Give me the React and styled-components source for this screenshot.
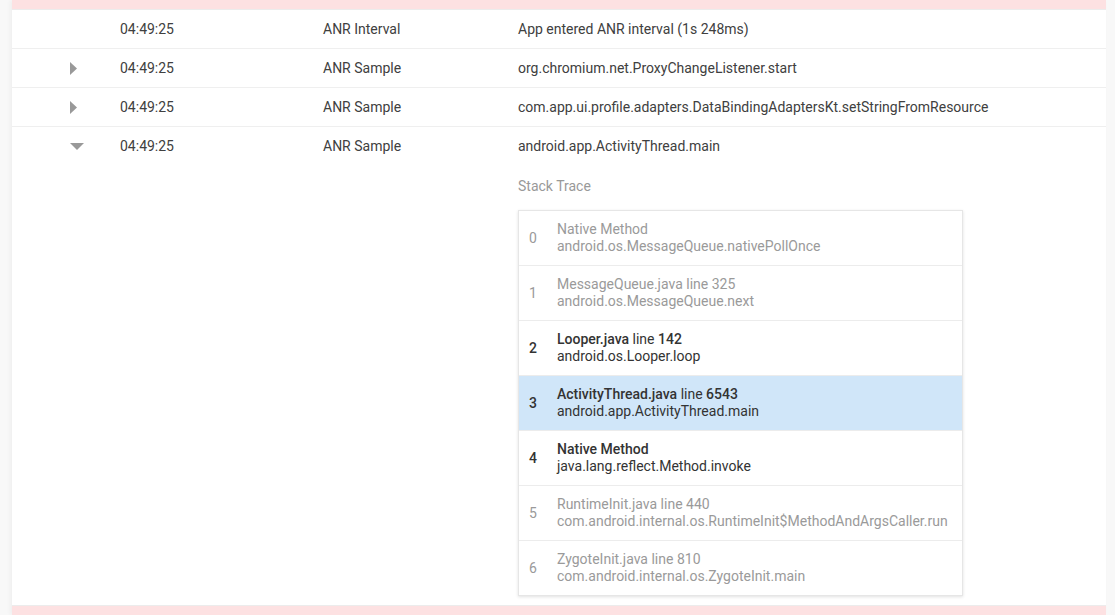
import React from "react";
import styled, { createGlobalStyle } from "styled-components";

const Global = createGlobalStyle`
  html, body { margin: 0; padding: 0; background: #f8f8f8; }
  body { font-family: Roboto, "Liberation Sans", sans-serif; font-size: 14px; color: #333; }
`;

const Page = styled.div`
  height: 615px;
  overflow: hidden;
  padding: 0 9px 0 12px;
  background: #f8f8f8;
`;

const Panel = styled.div`
  background: #fff;
  height: 100%;
  display: flex;
  flex-direction: column;
  box-shadow: -2px 0 4px rgba(0, 0, 0, 0.04);
`;

const PinkBar = styled.div`
  height: ${(p) => p.$h}px;
  background: #fde1e2;
  border-${(p) => (p.$top ? "bottom" : "top")}: 1px solid #ececec;
  flex: none;
`;

const Row = styled.div`
  display: grid;
  grid-template-columns: 108px 203px 195px 1fr;
  align-items: center;
  height: 38px;
  border-bottom: ${(p) => (p.$last ? "none" : "1px solid #efefef")};
  color: #404040;
`;

const Expanded = styled.div`
  flex: 1;
  display: flex;
  flex-direction: column;
`;

const ArrowCell = styled.div`
  display: flex;
  justify-content: flex-start;
  padding-left: 58px;
  align-items: center;
`;

const Cell = styled.div`
  white-space: nowrap;
`;

const Detail = styled.div`
  padding: 13px 0 0 506px;
  flex: 1;
`;

const Label = styled.div`
  color: #999;
  line-height: 16px;
  margin-bottom: 16px;
`;

const TraceBox = styled.div`
  width: 443px;
  border: 1px solid #e6e6e6;
  box-shadow: 0 1px 3px rgba(0, 0, 0, 0.12);
  background: #fff;
`;

const Frame = styled.div`
  display: flex;
  align-items: center;
  height: 54px;
  border-top: ${(p) => (p.$first ? "none" : "1px solid #ececec")};
  background: ${(p) => (p.$active ? "#d0e6f9" : "#fff")};
  color: ${(p) => (p.$dim ? "#9a9a9a" : "#333")};
`;

const Index = styled.div`
  width: 38px;
  padding-left: 10px;
  box-sizing: border-box;
  font-weight: ${(p) => (p.$dim ? 400 : 500)};
`;

const FrameText = styled.div`
  line-height: 17px;
`;

const File = styled.span`
  font-weight: ${(p) => (p.$dim ? 400 : 500)};
`;

const RightArrow = () => (
  <svg width="7" height="13" viewBox="0 0 7 13">
    <path d="M0 0 L7 6.5 L0 13 Z" fill="#999" />
  </svg>
);

const DownArrow = () => (
  <svg width="14" height="7" viewBox="0 0 14 7">
    <path d="M0 0 L14 0 L7 7 Z" fill="#999" />
  </svg>
);

const rows = [
  { arrow: null, time: "04:49:25", type: "ANR Interval", desc: "App entered ANR interval (1s 248ms)" },
  { arrow: "right", time: "04:49:25", type: "ANR Sample", desc: "org.chromium.net.ProxyChangeListener.start" },
  { arrow: "right", time: "04:49:25", type: "ANR Sample", desc: "com.app.ui.profile.adapters.DataBindingAdaptersKt.setStringFromResource" },
];

const frames = [
  { file: "Native Method", line: null, method: "android.os.MessageQueue.nativePollOnce", dim: true },
  { file: "MessageQueue.java", line: "325", method: "android.os.MessageQueue.next", dim: true },
  { file: "Looper.java", line: "142", method: "android.os.Looper.loop" },
  { file: "ActivityThread.java", line: "6543", method: "android.app.ActivityThread.main", active: true },
  { file: "Native Method", line: null, method: "java.lang.reflect.Method.invoke" },
  { file: "RuntimeInit.java", line: "440", method: "com.android.internal.os.RuntimeInit$MethodAndArgsCaller.run", dim: true },
  { file: "ZygoteInit.java", line: "810", method: "com.android.internal.os.ZygoteInit.main", dim: true },
];

export default function App() {
  return (
    <Page>
      <Global />
      <Panel>
        <PinkBar $h={9} $top />
        {rows.map((r, i) => (
          <Row key={i}>
            <ArrowCell>{r.arrow === "right" ? <RightArrow /> : null}</ArrowCell>
            <Cell>{r.time}</Cell>
            <Cell>{r.type}</Cell>
            <Cell>{r.desc}</Cell>
          </Row>
        ))}
        <Expanded>
          <Row $last>
            <ArrowCell>
              <DownArrow />
            </ArrowCell>
            <Cell>04:49:25</Cell>
            <Cell>ANR Sample</Cell>
            <Cell>android.app.ActivityThread.main</Cell>
          </Row>
          <Detail>
            <Label>Stack Trace</Label>
            <TraceBox>
              {frames.map((f, i) => (
                <Frame key={i} $first={i === 0} $active={f.active} $dim={f.dim}>
                  <Index $dim={f.dim}>{i}</Index>
                  <FrameText>
                    <div>
                      <File $dim={f.dim}>{f.file}</File>
                      {f.line ? (
                        <>
                          {" line "}
                          <File $dim={f.dim}>{f.line}</File>
                        </>
                      ) : null}
                    </div>
                    <div>{f.method}</div>
                  </FrameText>
                </Frame>
              ))}
            </TraceBox>
          </Detail>
        </Expanded>
        <PinkBar $h={9} />
      </Panel>
    </Page>
  );
}
